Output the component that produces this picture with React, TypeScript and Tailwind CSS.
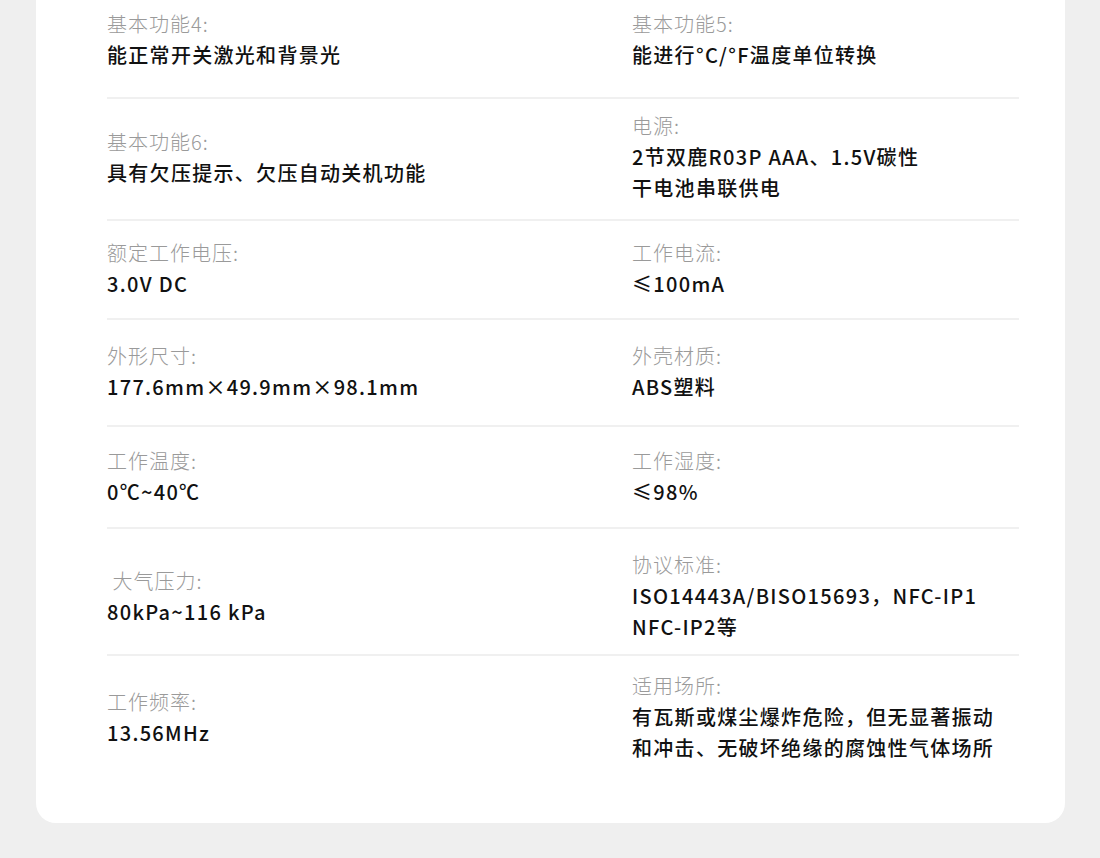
import React from 'react';

type Spec = {
  label: string;
  lines: string[];
};

type Row = {
  pad: string;
  left: Spec;
  right: Spec;
  last?: boolean;
};

// padding per row is taken from the reference, the rows are not evenly spaced
const rows: Row[] = [
  {
    pad: 'pt-[8px] pb-[27px]',
    left: { label: '基本功能4:', lines: ['能正常开关激光和背景光'] },
    right: { label: '基本功能5:', lines: ['能进行°C/°F温度单位转换'] },
  },
  {
    pad: 'pt-[11px] pb-[16px]',
    left: { label: '基本功能6:', lines: ['具有欠压提示、欠压自动关机功能'] },
    right: { label: '电源:', lines: ['2节双鹿R03P AAA、1.5V碳性', '干电池串联供电'] },
  },
  {
    pad: 'pt-[16px] pb-[19px]',
    left: { label: '额定工作电压:', lines: ['3.0V DC'] },
    right: { label: '工作电流:', lines: ['≤100mA'] },
  },
  {
    pad: 'pt-[20px] pb-[23px]',
    left: { label: '外形尺寸:', lines: ['177.6mm×49.9mm×98.1mm'] },
    right: { label: '外壳材质:', lines: ['ABS塑料'] },
  },
  {
    pad: 'pt-[18px] pb-[20px]',
    left: { label: '工作温度:', lines: ['0℃~40℃'] },
    right: { label: '工作湿度:', lines: ['≤98%'] },
  },
  {
    pad: 'pt-[20px] pb-[12px]',
    left: { label: ' 大气压力:', lines: ['80kPa~116 kPa'] },
    right: { label: '协议标准:', lines: ['ISO14443A/BISO15693，NFC-IP1', 'NFC-IP2等'] },
  },
  {
    pad: 'pt-[14px] pb-[60px]',
    left: { label: '工作频率:', lines: ['13.56MHz'] },
    right: { label: '适用场所:', lines: ['有瓦斯或煤尘爆炸危险，但无显著振动', '和冲击、无破坏绝缘的腐蚀性气体场所'] },
    last: true,
  },
];

const Cell: React.FC<{ spec: Spec }> = ({ spec }) => (
  <div className="flex flex-col">
    <span className="whitespace-pre text-[20px] leading-[31px] font-light tracking-[1px] text-[#9a9a9a]">{spec.label}</span>
    {spec.lines.map((line) => (
      <span key={line} className="whitespace-nowrap text-[20px] leading-[31px] font-medium tracking-[1.3px] text-[#111111]">
        {line}
      </span>
    ))}
  </div>
);

export default function App() {
  return (
    <div
      className="min-h-screen bg-[#efefef] pb-[35px]"
      style={{ fontFamily: '"Noto Sans CJK SC", "Noto Sans", sans-serif' }}
    >
      <div className="ml-[36px] mr-[35px] bg-white rounded-b-[20px] pl-[71px] pr-[46px]">
        {rows.map((row, i) => (
          <div
            key={i}
            className={`grid grid-cols-[525px_1fr] items-center ${row.pad} ${row.last ? '' : 'border-b-2 border-[#f0f0f0]'}`}
          >
            <Cell spec={row.left} />
            <Cell spec={row.right} />
          </div>
        ))}
      </div>
    </div>
  );
}
